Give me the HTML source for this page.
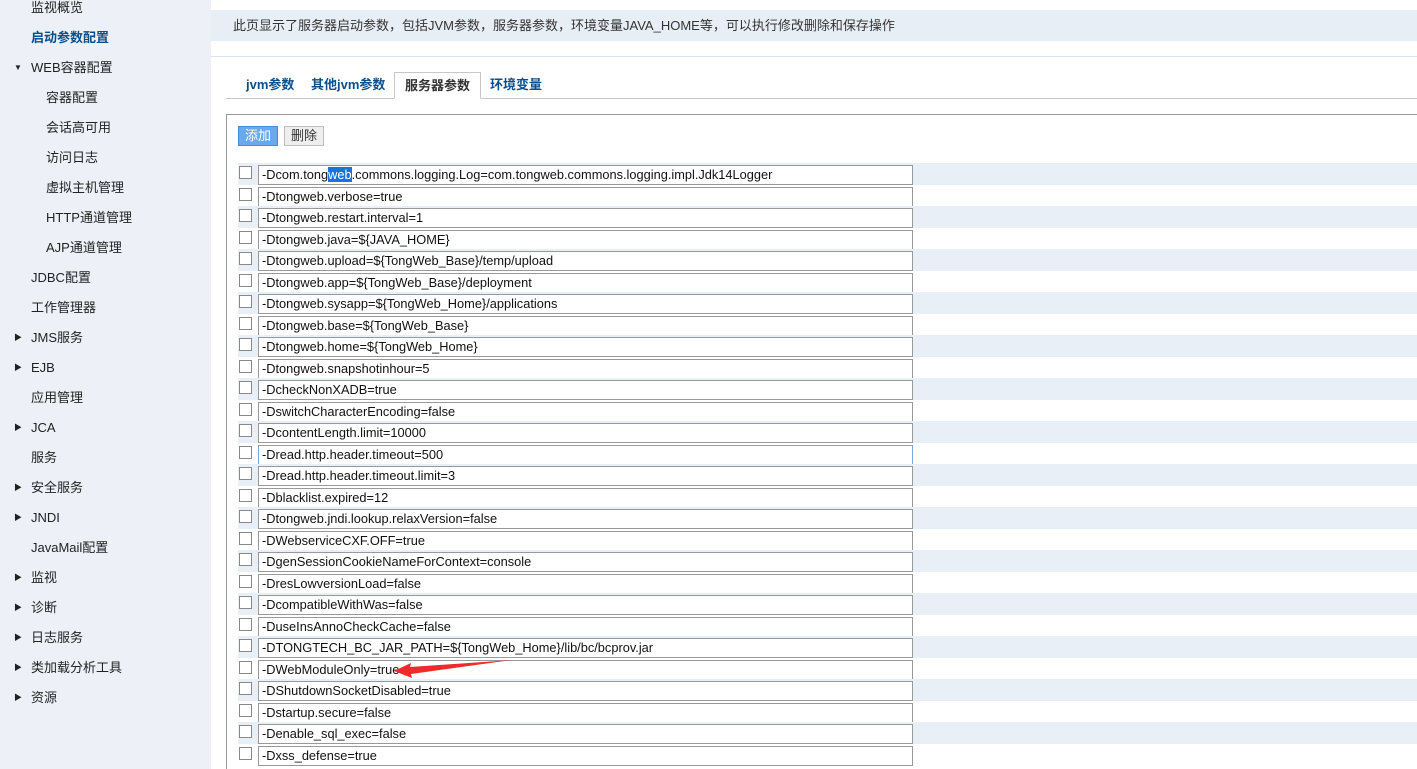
<!DOCTYPE html>
<html style="width:1417px;height:769px;overflow:hidden"><head><meta charset="utf-8"><style>
*{margin:0;padding:0;box-sizing:border-box}
body{width:1417px;height:769px;overflow:hidden;background:#fff;font-family:"Liberation Sans","Noto Sans CJK SC",sans-serif;font-size:13px;color:#222;position:relative}
#side{position:absolute;left:0;top:0;width:211px;height:769px;background:#edf1f7}
.it{position:absolute;left:31px;height:20px;line-height:20px;font-size:13px;color:#222}
.sub{left:46px}
.b{color:#0b4f8a;font-weight:bold}
.ar{position:absolute;left:-17px;top:0;font-size:8px;color:#222}
#note{position:absolute;left:211px;top:10px;width:1206px;height:31px;background:#e8eef6;line-height:31px;padding-left:22px;font-size:13px;color:#333}
#hl{position:absolute;left:211px;top:56px;width:1206px;height:1px;background:#dde2e8}
#tabline{position:absolute;left:226px;top:98px;width:1191px;height:1px;background:#c8c8c8}
.tab{position:absolute;top:72px;height:27px;line-height:26px;font-weight:bold;color:#0b4f8a;font-size:13px}
#act{left:394px;width:87px;border:1px solid #c8c8c8;border-bottom:1px solid #fff;background:#fff;color:#333;text-align:center}
#panel{position:absolute;left:226px;top:114px;width:1191px;height:655px;border:1px solid #999;border-right:none;border-bottom:none}
.btn{position:absolute;top:126px;height:20px;line-height:18px;width:40px;text-align:center;font-size:13px}
.row{position:absolute;left:238px;width:1179px;height:21.5px}
.row.s{background:#e8eff7}
.cb{position:absolute;left:1px;top:3px;width:13px;height:13px;border:1px solid #888;background:#fff}
.in{position:absolute;left:20px;top:2px;width:655px;height:20px;border:1px solid #999;background:#fff;line-height:18px;padding-left:3px;font-size:12.8px;color:#111;white-space:nowrap;overflow:hidden}
</style></head><body>
<div id="side">
<div class="it" style="top:-2px">监视概览</div>
<div class="it b" style="top:28px">启动参数配置</div>
<div class="it" style="top:58px"><span class="ar">▼</span>WEB容器配置</div>
<div class="it sub" style="top:88px">容器配置</div>
<div class="it sub" style="top:118px">会话高可用</div>
<div class="it sub" style="top:148px">访问日志</div>
<div class="it sub" style="top:178px">虚拟主机管理</div>
<div class="it sub" style="top:208px">HTTP通道管理</div>
<div class="it sub" style="top:238px">AJP通道管理</div>
<div class="it" style="top:268px">JDBC配置</div>
<div class="it" style="top:298px">工作管理器</div>
<div class="it" style="top:328px"><span class="ar">▶</span>JMS服务</div>
<div class="it" style="top:358px"><span class="ar">▶</span>EJB</div>
<div class="it" style="top:388px">应用管理</div>
<div class="it" style="top:418px"><span class="ar">▶</span>JCA</div>
<div class="it" style="top:448px">服务</div>
<div class="it" style="top:478px"><span class="ar">▶</span>安全服务</div>
<div class="it" style="top:508px"><span class="ar">▶</span>JNDI</div>
<div class="it" style="top:538px">JavaMail配置</div>
<div class="it" style="top:568px"><span class="ar">▶</span>监视</div>
<div class="it" style="top:598px"><span class="ar">▶</span>诊断</div>
<div class="it" style="top:628px"><span class="ar">▶</span>日志服务</div>
<div class="it" style="top:658px"><span class="ar">▶</span>类加载分析工具</div>
<div class="it" style="top:688px"><span class="ar">▶</span>资源</div>
</div>
<div id="note">此页显示了服务器启动参数，包括JVM参数，服务器参数，环境变量JAVA_HOME等，可以执行修改删除和保存操作</div>
<div id="hl"></div>
<div id="tabline"></div>
<div class="tab" style="left:246px">jvm参数</div>
<div class="tab" style="left:311px">其他jvm参数</div>
<div class="tab" id="act">服务器参数</div>
<div class="tab" style="left:490px">环境变量</div>
<div id="panel"></div>
<div class="btn" style="left:238px;background:#6aa9ee;border:1px solid #4a8ad8;color:#fff">添加</div>
<div class="btn" style="left:284px;background:#eee;border:1px solid #bbb;color:#333">删除</div>
<div id="rows"></div>
<script>
var d=["-Dcom.tong<span style=\"background:#1a73d9;color:#fff\">web</span>.commons.logging.Log=com.tongweb.commons.logging.impl.Jdk14Logger","-Dtongweb.verbose=true","-Dtongweb.restart.interval=1","-Dtongweb.java=${JAVA_HOME}","-Dtongweb.upload=${TongWeb_Base}/temp/upload","-Dtongweb.app=${TongWeb_Base}/deployment","-Dtongweb.sysapp=${TongWeb_Home}/applications","-Dtongweb.base=${TongWeb_Base}","-Dtongweb.home=${TongWeb_Home}","-Dtongweb.snapshotinhour=5","-DcheckNonXADB=true","-DswitchCharacterEncoding=false","-DcontentLength.limit=10000","-Dread.http.header.timeout=500","-Dread.http.header.timeout.limit=3","-Dblacklist.expired=12","-Dtongweb.jndi.lookup.relaxVersion=false","-DWebserviceCXF.OFF=true","-DgenSessionCookieNameForContext=console","-DresLowversionLoad=false","-DcompatibleWithWas=false","-DuseInsAnnoCheckCache=false","-DTONGTECH_BC_JAR_PATH=${TongWeb_Home}/lib/bc/bcprov.jar","-DWebModuleOnly=true","-DShutdownSocketDisabled=true","-Dstartup.secure=false","-Denable_sql_exec=false","-Dxss_defense=true"];
var h="";for(var i=0;i<d.length;i++){h+='<div class="row'+(i%2==0?' s':'')+'" style="top:'+(163+i*21.5)+'px"><div class="cb"></div><div class="in"'+(i==13?' style="border-color:#7aa7d8"':'')+'>'+d[i]+'</div></div>';}
document.getElementById("rows").innerHTML=h;
</script>
<svg style="position:absolute;left:0;top:0" width="1417" height="769"><polygon points="394,671 411,663 410,667 512,660 411,674 412,678" fill="#f02a2a"/></svg>
</body></html>
